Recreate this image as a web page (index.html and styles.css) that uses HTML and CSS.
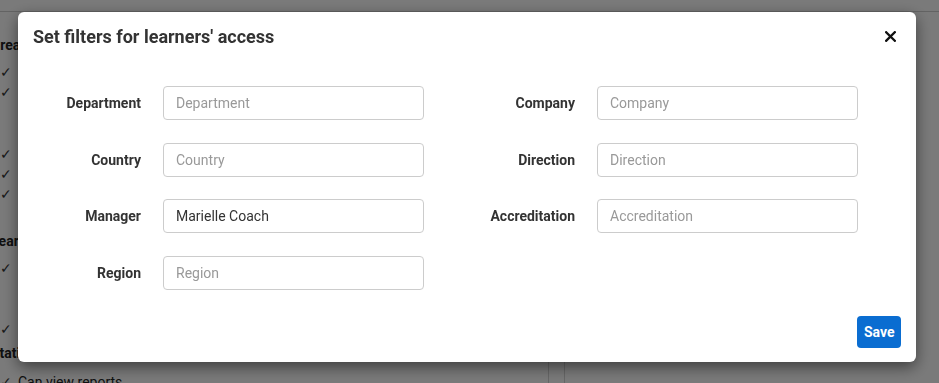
FILE: index.html
```html
<!DOCTYPE html>
<html lang="en">
<head>
<meta charset="utf-8">
<title>Set filters for learners' access</title>
<link rel="stylesheet" href="styles.css">
</head>
<body>
<div class="page">
  <div class="topbar"></div>
  <div class="columns">
    <div class="col-left">
      <div class="perm-list">
        <div class="perm-head h1">Create permissions</div>
        <div class="perm gap-s"><span class="chk">✓</span>Can create courses</div>
        <div class="perm"><span class="chk">✓</span>Can create paths</div>
        <div class="perm gap-l1"><span class="chk">✓</span>Can edit courses</div>
        <div class="perm"><span class="chk">✓</span>Can edit paths</div>
        <div class="perm"><span class="chk">✓</span>Can delete content</div>
        <div class="perm-head h2">Learners</div>
        <div class="perm gap-s"><span class="chk">✓</span>Can view learners</div>
        <div class="perm gap-l2"><span class="chk">✓</span>Can edit learners</div>
        <div class="perm-head h3">Statistics</div>
        <div class="perm gap-last"><span class="chk">✓</span>Can view reports</div>
      </div>
    </div>
    <div class="col-mid"></div>
    <div class="col-right"></div>
  </div>
</div>

<div class="backdrop"></div>

<div class="modal" role="dialog" aria-labelledby="modal-title">
  <div class="modal-header">
    <h2 id="modal-title" class="modal-title">Set filters for learners' access</h2>
    <button class="close-btn" aria-label="Close">
      <svg width="11" height="11" viewBox="0 0 11 11"><path d="M1.2 1.2 L9.8 9.8 M9.8 1.2 L1.2 9.8" stroke="#111" stroke-width="2.3" stroke-linecap="square" fill="none"/></svg>
    </button>
  </div>
  <div class="modal-body">
    <div class="filter-grid">
      <label class="f-label">Department</label>
      <input class="f-input" type="text" placeholder="Department">
      <label class="f-label">Company</label>
      <input class="f-input" type="text" placeholder="Company">

      <label class="f-label">Country</label>
      <input class="f-input" type="text" placeholder="Country">
      <label class="f-label">Direction</label>
      <input class="f-input" type="text" placeholder="Direction">

      <label class="f-label">Manager</label>
      <input class="f-input" type="text" placeholder="Manager" value="Marielle Coach">
      <label class="f-label">Accreditation</label>
      <input class="f-input" type="text" placeholder="Accreditation">

      <label class="f-label">Region</label>
      <input class="f-input" type="text" placeholder="Region">
    </div>
  </div>
  <div class="modal-footer">
    <button class="save-btn">Save</button>
  </div>
</div>
</body>
</html>
```

FILE: styles.css
```css
* { box-sizing: border-box; }

html, body {
  margin: 0;
  padding: 0;
  height: 100%;
  overflow: hidden;
}

body {
  font-family: Roboto, "Liberation Sans", Arial, sans-serif;
  background: #ffffff;
  color: #333333;
}

/* ---------- background page ---------- */
.page {
  height: 100%;
}

.topbar {
  height: 12px;
  border-bottom: 1px solid #cfcfcf;
}

.columns {
  display: flex;
  height: 100%;
}

.col-left {
  width: 549px;
  border-right: 1px solid #d6d6d6;
  overflow: hidden;
}

.col-mid {
  width: 16px;
  border-right: 1px solid #d6d6d6;
}

.col-right {
  flex: 1;
}

.perm-list {
  margin-left: -9px;
  font-size: 14px;
  line-height: 20px;
  color: #222;
}

.perm-head {
  font-weight: 700;
  white-space: nowrap;
}

.h1 { margin-top: 23px; }
.h2 { margin-top: 27px; }
.h3 { margin-top: 4px; }

.perm {
  white-space: nowrap;
  padding-left: 9px;
}

.gap-s { margin-top: 7px; }
.gap-l1 { margin-top: 42px; }
.gap-l2 { margin-top: 41px; }
.gap-last { margin-top: 9px; }

.chk {
  display: inline-block;
  width: 18px;
  font-family: "DejaVu Sans", sans-serif;
  font-size: 14px;
  font-weight: 300;
  color: #333;
}

/* ---------- overlay ---------- */
.backdrop {
  position: fixed;
  inset: 0;
  background: rgba(0, 0, 0, 0.52);
}

/* ---------- modal ---------- */
.modal {
  position: fixed;
  left: 18px;
  top: 12px;
  width: 898px;
  background: #ffffff;
  border-radius: 6px;
  box-shadow: 0 5px 15px rgba(0, 0, 0, 0.5);
}

.modal-header {
  display: flex;
  align-items: center;
  justify-content: space-between;
  padding: 14px 20px 0 15px;
}

.modal-title {
  margin: 0;
  font-size: 18px;
  line-height: 21px;
  font-weight: 700;
  color: #333333;
}

.close-btn {
  border: 0;
  background: transparent;
  padding: 0;
  width: 11px;
  height: 11px;
  display: flex;
  cursor: pointer;
}

.modal-body {
  padding: 39px 0 0 23px;
}

.filter-grid {
  display: grid;
  grid-template-columns: 100px 261px 129px 261px;
  column-gap: 22px;
  row-gap: 22.5px;
  align-items: center;
}

.f-label {
  text-align: right;
  font-size: 14px;
  font-weight: 700;
  color: #333333;
  white-space: nowrap;
}

.f-input {
  height: 34px;
  width: 261px;
  border: 1px solid #cccccc;
  border-radius: 4px;
  padding: 0 12px;
  font-family: Roboto, "Liberation Sans", Arial, sans-serif;
  font-size: 14px;
  color: #333333;
  background: #ffffff;
  outline: none;
}

.f-input::placeholder {
  color: #999999;
}

.modal-footer {
  display: flex;
  justify-content: flex-end;
  padding: 26.5px 15px 14px 0;
}

.save-btn {
  height: 32px;
  padding: 0 6.5px;
  border: 0;
  border-radius: 4px;
  background: #0a6dd1;
  color: #ffffff;
  font-family: Roboto, "Liberation Sans", Arial, sans-serif;
  font-size: 14px;
  font-weight: 700;
  cursor: pointer;
}
```
